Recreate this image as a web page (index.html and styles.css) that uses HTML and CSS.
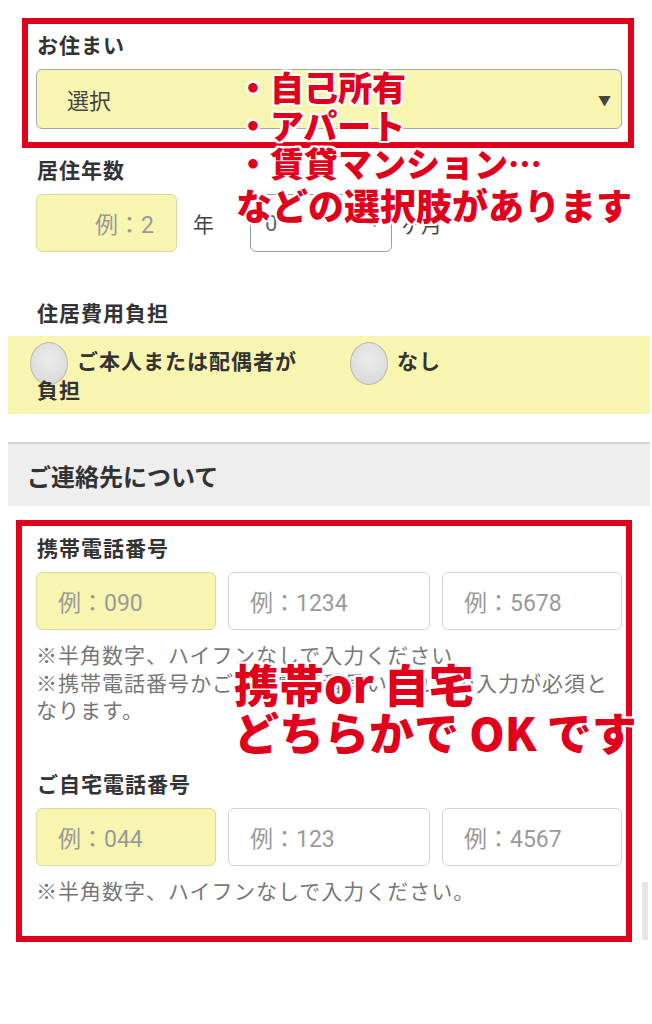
FILE: index.html
```html
<!DOCTYPE html>
<html lang="ja">
<head>
  <meta charset="UTF-8">
  <meta name="viewport" content="width=device-width, initial-scale=1.0">
  <title>お住まい・ご連絡先</title>
  <link rel="stylesheet" href="styles.css">
</head>
<body>

<div class="page">

  <div class="fields">
    <div class="label label-first">お住まい</div>
    <div class="select yellow">
      <span>選択</span>
      <span class="arrow">▼</span>
    </div>

    <div class="label">居住年数</div>
    <div class="years-row">
      <div class="input yellow input-year">例：2</div>
      <span class="unit">年</span>
      <div class="select select-month">
        <span>0</span>
        <span class="arrow small">▼</span>
      </div>
      <span class="unit">ヶ月</span>
    </div>

    <div class="label label-cost">住居費用負担</div>
  </div>

  <div class="radio-band">
    <div class="radio-opt opt-self"><span class="radio"></span>ご本人または配偶者が負担</div>
    <div class="radio-opt"><span class="radio"></span>なし</div>
  </div>

  <div class="section-head">ご連絡先について</div>

  <div class="fields">
    <div class="label label-mobile">携帯電話番号</div>
    <div class="tel-row">
      <div class="input yellow">例：090</div>
      <div class="input">例：1234</div>
      <div class="input">例：5678</div>
    </div>
    <p class="note">※半角数字、ハイフンなしで入力ください<br>※携帯電話番号かご自宅電話番号いずれかの入力が必須となります。</p>

    <div class="label label-home">ご自宅電話番号</div>
    <div class="tel-row">
      <div class="input yellow">例：044</div>
      <div class="input">例：123</div>
      <div class="input">例：4567</div>
    </div>
    <p class="note">※半角数字、ハイフンなしで入力ください。</p>
  </div>

  <!-- 注釈 -->
  <div class="red-box box-home"></div>
  <div class="red-box box-tel"></div>
  <div class="scroll-bar"></div>

  <div class="memo memo-home">
    <div>・自己所有</div>
    <div>・アパート</div>
    <div>・賃貸マンション…</div>
    <div class="memo-last">などの選択肢があります</div>
  </div>

  <div class="memo memo-tel">
    <div>携帯or 自宅</div>
    <div>どちらかで OK です</div>
  </div>

</div>

</body>
</html>
```

FILE: styles.css
```css
body {
  margin: 0;
  background: #fff;
  color: #333;
  font-family: Roboto, "Noto Sans CJK JP", sans-serif;
}

.page {
  position: relative;
  width: 652px;
  height: 1024px;
  padding: 0 2px 0 8px;
  box-sizing: border-box;
  overflow: hidden;
}

.fields {
  padding: 0 28px;
}

.label {
  font-size: 21px;
  line-height: 28px;
  font-weight: 700;
  letter-spacing: 1px;
  color: #333;
  margin: 28px 0 9px 1px;
}

.label-first { margin-top: 32px; }
.label-cost { margin-top: 48px; margin-bottom: 8px; }
.label-mobile { margin-top: 29px; }
.label-home { margin-top: 45px; }

.yellow {
  background: #f8f5b1;
}

.select {
  height: 60px;
  box-sizing: border-box;
  border: 1.5px solid #9eaab0;
  border-radius: 6px;
  display: flex;
  align-items: center;
  justify-content: space-between;
  padding: 0 10px 0 30px;
  font-size: 22px;
  color: #444;
}

.arrow {
  font-size: 13px;
  color: #444;
}

.arrow.small {
  font-size: 9px;
}

.years-row {
  display: flex;
  align-items: center;
  height: 58px;
}

.input {
  height: 58px;
  box-sizing: border-box;
  border: 1.5px solid #d3d3d3;
  border-radius: 6px;
  display: flex;
  align-items: center;
  padding-left: 21px;
  font-size: 23px;
  color: #9a9a9a;
  background-color: #fff;
}

.input.yellow {
  background: #f8f5b1;
  border-color: #dcd8a6;
}

.input-year {
  width: 141px;
  justify-content: flex-end;
  padding: 0 22px 0 0;
}

.unit {
  font-size: 21px;
  color: #444;
  margin: 0 8px 0 8px;
}

.years-row .unit:nth-child(2) {
  margin: 0 36px 0 16px;
}

.select-month {
  width: 142px;
  height: 58px;
  background: #fff;
  border-color: #8ea1b4;
  padding: 0 12px 0 14px;
  color: #666;
}

.radio-band {
  background: #f8f5b1;
  display: flex;
  align-items: flex-start;
  gap: 45px;
  padding: 12px 0 8px 22px;
  font-size: 21px;
  line-height: 29px;
  font-weight: 700;
  letter-spacing: 1px;
  color: #333;
}

.radio-opt {
  padding-left: 7px;
}

.opt-self {
  width: 268px;
}

.radio {
  display: inline-block;
  width: 38px;
  height: 43px;
  margin: -8px 9px -8px -7px;
  vertical-align: middle;
  box-sizing: border-box;
  border: 1.5px solid #bdbaa6;
  border-radius: 50%;
  background: radial-gradient(circle at 50% 40%, #ececec 0%, #dcdcdc 70%, #d0d0d0 100%);
}

.section-head {
  margin-top: 28px;
  height: 64px;
  box-sizing: border-box;
  background: #eeeeee;
  border-top: 2px solid #d4d4d4;
  display: flex;
  align-items: center;
  padding-left: 19px;
  font-size: 24px;
  font-weight: 700;
  color: #333;
}

.tel-row {
  display: grid;
  grid-template-columns: 180px 1fr 180px;
  gap: 12px;
}

.note {
  margin: 13px 0 0 0;
  font-size: 21px;
  line-height: 27.5px;
  letter-spacing: 1px;
  color: #777;
}

/* 注釈 */
.red-box {
  position: absolute;
  border: 6px solid #e1001b;
}

.box-home {
  left: 22px;
  top: 18px;
  width: 600px;
  height: 118px;
}

.box-tel {
  left: 16px;
  top: 520px;
  width: 604px;
  height: 410px;
}

.scroll-bar {
  position: absolute;
  left: 642px;
  top: 882px;
  width: 6px;
  height: 58px;
  background: #e6e6e6;
}

.memo {
  position: absolute;
  color: #e1001b;
  font-family: "Noto Sans CJK JP", sans-serif;
  font-weight: 900;
  white-space: nowrap;
  text-shadow:
    2px 0 0 #fff, -2px 0 0 #fff, 0 2px 0 #fff, 0 -2px 0 #fff,
    2px 2px 0 #fff, -2px -2px 0 #fff, 2px -2px 0 #fff, -2px 2px 0 #fff;
}

.memo-home {
  left: 236px;
  top: 68px;
  font-size: 34px;
  line-height: 38px;
}

.memo-last {
  font-size: 36px;
  margin-top: 3px;
}

.memo-tel {
  left: 234px;
  top: 660px;
  font-size: 45px;
  line-height: 48px;
}
```
